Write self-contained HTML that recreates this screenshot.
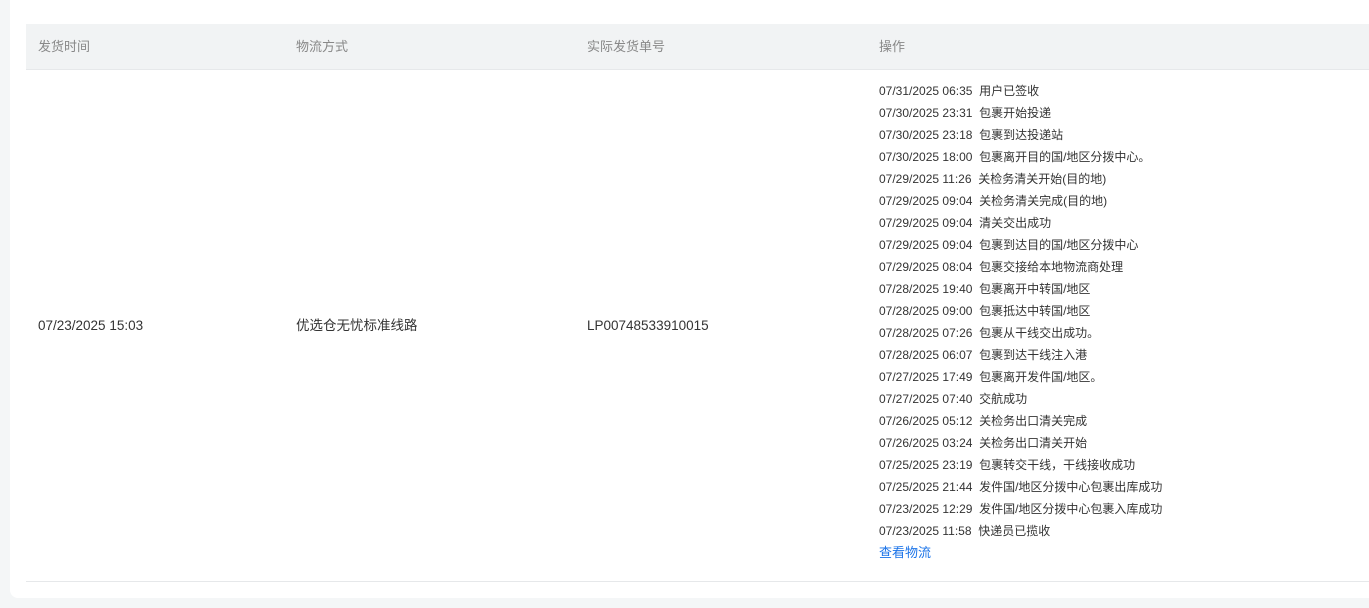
<!DOCTYPE html>
<html><head><meta charset="utf-8"><style>
body{margin:0;width:1369px;height:608px;background:#f4f6f7;font-family:"Liberation Sans","Noto Sans CJK SC",sans-serif;overflow:hidden;position:relative}
.card{position:absolute;left:10px;top:-10px;width:1369px;height:608px;background:#fff;border-radius:8px}
.hdr{position:absolute;left:26px;top:24px;width:1343px;height:45px;background:#f1f3f4;border-bottom:1px solid #e6e8ea}
.h{position:absolute;top:39px;font-size:13px;color:#888;line-height:16px}
.c{position:absolute;top:318px;font-size:13.5px;color:#333;line-height:16px}
.log{position:absolute;left:879px;top:80px;font-size:12px;color:#333;line-height:22px}
.log a{color:#1a73e8;text-decoration:none;font-size:13px}
.line{position:absolute;left:26px;top:581px;width:1343px;height:1px;background:#e6e8ea}
</style></head><body>
<div class="card"></div>
<div class="hdr"></div>
<div class="h" style="left:38px">发货时间</div>
<div class="h" style="left:296px">物流方式</div>
<div class="h" style="left:587px">实际发货单号</div>
<div class="h" style="left:879px">操作</div>
<div class="c" style="left:38px">07/23/2025 15:03</div>
<div class="c" style="left:296px">优选仓无忧标准线路</div>
<div class="c" style="left:587px">LP00748533910015</div>
<div class="log">
07/31/2025 06:35&nbsp; 用户已签收<br>
07/30/2025 23:31&nbsp; 包裹开始投递<br>
07/30/2025 23:18&nbsp; 包裹到达投递站<br>
07/30/2025 18:00&nbsp; 包裹离开目的国/地区分拨中心。<br>
07/29/2025 11:26&nbsp; 关检务清关开始(目的地)<br>
07/29/2025 09:04&nbsp; 关检务清关完成(目的地)<br>
07/29/2025 09:04&nbsp; 清关交出成功<br>
07/29/2025 09:04&nbsp; 包裹到达目的国/地区分拨中心<br>
07/29/2025 08:04&nbsp; 包裹交接给本地物流商处理<br>
07/28/2025 19:40&nbsp; 包裹离开中转国/地区<br>
07/28/2025 09:00&nbsp; 包裹抵达中转国/地区<br>
07/28/2025 07:26&nbsp; 包裹从干线交出成功。<br>
07/28/2025 06:07&nbsp; 包裹到达干线注入港<br>
07/27/2025 17:49&nbsp; 包裹离开发件国/地区。<br>
07/27/2025 07:40&nbsp; 交航成功<br>
07/26/2025 05:12&nbsp; 关检务出口清关完成<br>
07/26/2025 03:24&nbsp; 关检务出口清关开始<br>
07/25/2025 23:19&nbsp; 包裹转交干线，干线接收成功<br>
07/25/2025 21:44&nbsp; 发件国/地区分拨中心包裹出库成功<br>
07/23/2025 12:29&nbsp; 发件国/地区分拨中心包裹入库成功<br>
07/23/2025 11:58&nbsp; 快递员已揽收<br>
<a>查看物流</a>
</div>
<div class="line"></div>
</body></html>
